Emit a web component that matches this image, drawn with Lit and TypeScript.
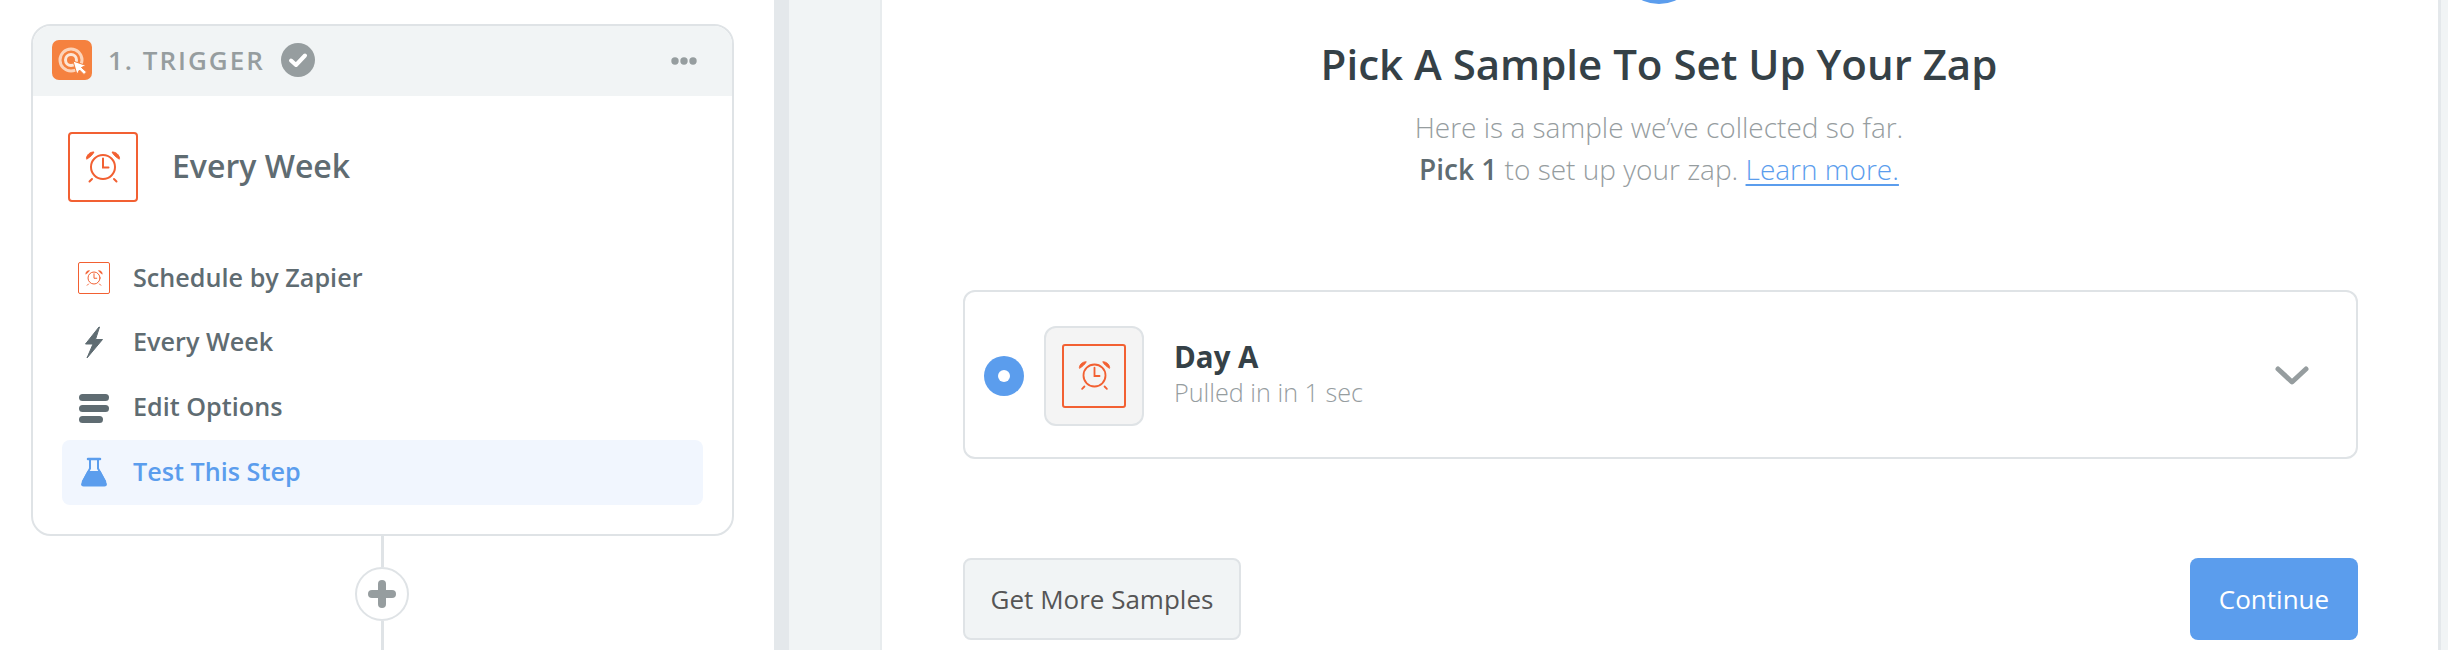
import { LitElement, html, css, svg } from "lit";
import { customElement } from "lit/decorators.js";

const clock = () => svg`<svg class="clock" viewBox="0 0 36 36" fill="none" stroke="#f26032" stroke-width="2" stroke-linecap="round">
  <circle cx="18" cy="18" r="12"/>
  <path d="M18 9.500V18.500H23.500"/>
  <path d="M1.500 9C2 5.500 5 3 9 3C7.500 6 5 8 2 10Z" fill="#f26032" stroke-width="1" stroke-linejoin="round"/>
  <path d="M34.500 9C34 5.500 31 3 27 3C28.500 6 31 8 34 10Z" fill="#f26032" stroke-width="1" stroke-linejoin="round"/>
  <path d="M7 30L4.500 32.500M29 30L31.500 32.500"/>
</svg>`;

@customElement("app-root")
export class AppRoot extends LitElement {
  static styles = css`
    :host {
      display: block;
      width: 2448px;
      height: 650px;
      overflow: hidden;
      font-family: "Open Sans", "Noto Sans", sans-serif;
      background: #fff;
    }
    * { box-sizing: border-box; }
    .page { display: flex; height: 650px; overflow: hidden; }
    .left {
      width: 774px;
      flex: none;
      padding: 24px 0 0 31px;
      display: flex;
      flex-direction: column;
    }
    .card {
      width: 703px;
      height: 512px;
      border: 2px solid #dfe3e6;
      border-radius: 20px;
      overflow: hidden;
      flex: none;
    }
    .head {
      height: 70px;
      background: #f1f4f5;
      display: flex;
      align-items: center;
      padding: 0 35px 0 19px;
      margin-bottom: 36px;
    }
    .zicon { width: 40px; height: 40px; flex: none; display: block; margin-bottom: 2px; }
    .step {
      margin-left: 16px;
      font-size: 26px;
      font-weight: 600;
      letter-spacing: 2px;
      color: #969d9f;
      line-height: 34px;
      white-space: nowrap;
      padding-bottom: 2px;
    }
    .done { width: 34px; height: 34px; margin-left: 16px; flex: none; display: block; margin-bottom: 3px; }
    .dots { margin-left: auto; width: 26px; height: 8px; display: block; }
    .summary { display: flex; align-items: center; padding-left: 35px; margin-bottom: 44px; }
    .appbox {
      width: 70px; height: 70px;
      border: 2px solid #f26032;
      border-radius: 4px;
      display: flex; align-items: center; justify-content: center;
      flex: none;
      background: #fff;
    }
    .appbox .clock { width: 36px; height: 36px; display: block; }
    .summary .name {
      margin-left: 34px;
      font-size: 32px;
      font-weight: 600;
      color: #5f6c72;
      line-height: 40px;
      padding-bottom: 2px;
    }
    .nav { display: flex; flex-direction: column; margin: 0 29px; }
    .row {
      height: 64.67px;
      display: flex;
      align-items: center;
      padding-left: 16px;
      font-size: 25.2px;
      font-weight: 600;
      color: #5f6c72;
      border-radius: 8px;
    }
    .row span.label { padding-bottom: 3px; }
    .row.active { background: #f1f6fe; color: #5b9ded; }
    .ricon { width: 32px; height: 32px; flex: none; margin-right: 23px; display: flex; align-items: center; justify-content: center; }
    .ricon svg { display: block; }
    .mini { border: 1.5px solid #f26032; border-radius: 2px; }
    .mini .clock { width: 18px; height: 18px; }
    .connector { display: flex; flex-direction: column; align-items: center; width: 54px; margin-left: 324px; flex: none; }
    .line { width: 3px; background: #dfe3e6; flex: none; }
    .line.a { height: 31px; }
    .line.b { height: 40px; }
    .plus {
      width: 54px; height: 54px; flex: none;
      border: 2px solid #dfe3e6; border-radius: 50%;
      display: flex; align-items: center; justify-content: center;
      background: #fff;
    }
    .band { width: 15px; flex: none; background: #e4e8eb; }
    .gutter { width: 93px; flex: none; background: #f1f4f5; border-right: 2px solid #e8ecee; }
    .main {
      width: 1556px;
      flex: none;
      padding: 0 80px 0 81px;
      display: flex;
      flex-direction: column;
      overflow: hidden;
    }
    .top {
      display: block;
      width: 80px; height: 5px; margin: 0 auto;
      flex: none;
    }
    .title {
      margin: 34px 0 0;
      padding-right: 3px;
      text-align: center;
      font-size: 42px;
      font-weight: 600;
      line-height: 50px;
      color: #354147;
    }
    .sub {
      margin: 17px 0 0;
      padding-right: 3px;
      text-align: center;
      font-size: 28px;
      font-weight: 300;
      line-height: 42px;
      color: #969d9f;
    }
    .sub b { font-weight: 600; color: #5f6c72; }
    .sub a { color: #5b9ded; text-decoration: underline; text-decoration-thickness: 2px; text-underline-offset: 4px; }
    .sample {
      margin-top: 100px;
      height: 169px;
      border: 2px solid #dfe3e6;
      border-radius: 12px;
      display: flex;
      align-items: center;
      padding: 2px 46px 0 19px;
      flex: none;
    }
    .radio { width: 40px; height: 40px; border-radius: 50%; background: #5b9ded; display: flex; align-items: center; justify-content: center; flex: none; }
    .radio i { width: 12px; height: 12px; border-radius: 50%; background: #fff; display: block; }
    .tile {
      width: 100px; height: 100px; margin-left: 20px; flex: none;
      border: 2px solid #dfe3e6; border-radius: 12px;
      background: #f4f4f4;
      display: flex; align-items: center; justify-content: center;
    }
    .tile .box {
      width: 64px; height: 64px;
      border: 2px solid #f26032; border-radius: 3px;
      display: flex; align-items: center; justify-content: center;
    }
    .tile .clock { width: 33px; height: 33px; display: block; }
    .info { margin-left: 30px; display: flex; flex-direction: column; padding-bottom: 4px; }
    .info .t { font-size: 29.500px; font-weight: 700; color: #354147; line-height: 38px; }
    .info .s { font-size: 25.2px; font-weight: 300; color: #969d9f; line-height: 33px; }
    .chev { margin-left: auto; width: 36px; height: 22px; display: block; }
    .actions { display: flex; justify-content: space-between; margin-top: 99px; }
    .btn {
      height: 82px;
      border-radius: 8px;
      display: flex; align-items: center; justify-content: center;
      font-size: 26px;
      font-weight: 400;
    }
    .btn.ghost { width: 278px; border: 2px solid #dfe3e6; background: #f1f4f5; color: #555; }
    .btn.primary { width: 168px; background: #5b9ded; color: #fff; }
    .edge { width: 10px; flex: none; background: #f1f4f5; border-left: 3px solid #e4e8eb; }
  `;

  render() {
    return html`
      <div class="page">
        <div class="left">
          <div class="card">
            <div class="head">
              <svg class="zicon" viewBox="0 0 40 40">
                <rect width="40" height="40" rx="7" fill="#f5813f"/>
                <circle cx="19" cy="20" r="11" fill="none" stroke="#fcd3b9" stroke-width="3"/>
                <circle cx="19" cy="20" r="5.500" fill="none" stroke="#fde6d6" stroke-width="3"/>
                <path d="M21 21L34 25.500L29.500 27.500L34.500 32L32 34.500L27.500 30L25 34.500Z" fill="#fff" stroke="#f5813f" stroke-width="1"/>
              </svg>
              <span class="step">1. TRIGGER</span>
              <svg class="done" viewBox="0 0 34 34">
                <circle cx="17" cy="17" r="17" fill="#969d9f"/>
                <path d="M10 17.500L15 22L24 12.500" fill="none" stroke="#fff" stroke-width="4" stroke-linecap="round" stroke-linejoin="round"/>
              </svg>
              <svg class="dots" viewBox="0 0 26 8" fill="#969d9f">
                <circle cx="4" cy="4" r="3.700"/><circle cx="13" cy="4" r="3.700"/><circle cx="22" cy="4" r="3.700"/>
              </svg>
            </div>
            <div class="summary">
              <div class="appbox">${clock()}</div>
              <div class="name">Every Week</div>
            </div>
            <div class="nav">
              <div class="row"><span class="ricon mini">${clock()}</span><span class="label">Schedule by Zapier</span></div>
              <div class="row">
                <span class="ricon"><svg width="20" height="33" viewBox="0 0 20 33" fill="#5f6c72" stroke="#5f6c72" stroke-width="1" stroke-linejoin="round"><path d="M15 1L1.500 18H9L3 32L18.500 13.500H11.500L15.500 1Z"/></svg></span><span class="label">Every Week</span>
              </div>
              <div class="row">
                <span class="ricon"><svg width="32" height="30" viewBox="0 0 32 30" fill="#5f6c72"><rect x="1" y="1" width="30" height="7" rx="3.500"/><rect x="1" y="12" width="30" height="7" rx="3.500"/><rect x="1" y="23" width="24" height="7" rx="3.500"/></svg></span><span class="label">Edit Options</span>
              </div>
              <div class="row active">
                <span class="ricon"><svg width="26" height="30" viewBox="0 0 26 30" fill="#5b9ded"><path d="M7 2H19" stroke="#5b9ded" stroke-width="2.500" stroke-linecap="round"/><path d="M9 2V11.500L1.500 25" fill="none" stroke="#5b9ded" stroke-width="2"/><path d="M17 2V11.500L24.500 25" fill="none" stroke="#5b9ded" stroke-width="2"/><path d="M6.500 14H19.500L25.600 26C26.300 28 25.300 29.500 23.500 29.500H2.500C.7 29.500 -.3 28 .4 26Z"/></svg></span><span class="label">Test This Step</span>
              </div>
            </div>
          </div>
          <div class="connector">
            <div class="line a"></div>
            <div class="plus"><svg width="28" height="28" viewBox="0 0 28 28" fill="#969d9f"><rect x="10" y="0" width="8" height="28" rx="4"/><rect x="0" y="10" width="28" height="8" rx="4"/></svg></div>
            <div class="line b"></div>
          </div>
        </div>
        <div class="band"></div>
        <div class="gutter"></div>
        <div class="main">
          <svg class="top" viewBox="0 0 80 5"><circle cx="38" cy="-36" r="40" fill="#5b9ded"/></svg>
          <h1 class="title">Pick A Sample To Set Up Your Zap</h1>
          <p class="sub">Here is a sample we’ve collected so far.<br><b>Pick 1</b> to set up your zap. <a>Learn more.</a></p>
          <div class="sample">
            <div class="radio"><i></i></div>
            <div class="tile"><div class="box">${clock()}</div></div>
            <div class="info"><div class="t">Day A</div><div class="s">Pulled in in 1 sec</div></div>
            <svg class="chev" viewBox="0 0 36 22"><path d="M4 4L18 17L32 4" fill="none" stroke="#969d9f" stroke-width="5" stroke-linecap="round" stroke-linejoin="round"/></svg>
          </div>
          <div class="actions">
            <div class="btn ghost">Get More Samples</div>
            <div class="btn primary">Continue</div>
          </div>
        </div>
        <div class="edge"></div>
      </div>
    `;
  }
}
